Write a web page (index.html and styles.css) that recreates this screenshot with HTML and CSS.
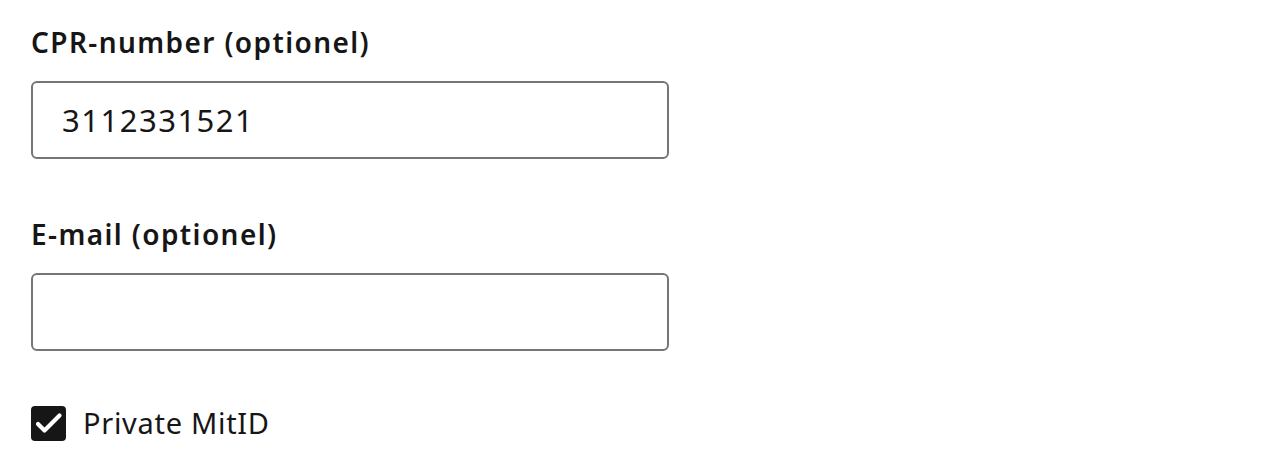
FILE: index.html
```html
<!DOCTYPE html>
<html lang="da">
<head>
    <meta charset="UTF-8">
    <title>MitID</title>
    <link rel="stylesheet" href="styles.css">
</head>
<body>
    <form class="form">
        <div class="field">
            <label for="cpr" class="label">CPR-number (optionel)</label>
            <input type="text" id="cpr" class="input" value="3112331521">
        </div>
        <div class="field">
            <label for="email" class="label">E-mail (optionel)</label>
            <input type="text" id="email" class="input">
        </div>
        <label class="check">
            <span class="check-box">
                <svg width="35" height="35" viewBox="0 0 35 35"><path d="M7 18l6.5 6.5L28.5 9.5" fill="none" stroke="#fff" stroke-width="4.2" stroke-linecap="round" stroke-linejoin="round"/></svg>
            </span>
            <span class="check-text">Private MitID</span>
        </label>
    </form>
</body>
</html>
```

FILE: styles.css
```css
* {
    margin: 0;
    padding: 0;
    box-sizing: border-box;
}

body {
    background: #fff;
    color: #161616;
    font-family: "Noto Sans", "Open Sans", sans-serif;
}

.form {
    width: 638px;
    margin-left: 31px;
    padding-top: 22px;
}

.field {
    margin-bottom: 55px;
}

.label {
    display: block;
    font-size: 28px;
    font-weight: 600;
    letter-spacing: 1.4px;
    line-height: 40px;
    margin-bottom: 19px;
}

.input {
    display: block;
    width: 100%;
    height: 78px;
    border: 2px solid #767676;
    border-radius: 6px;
    padding: 0 29px;
    font-family: inherit;
    font-size: 31px;
    letter-spacing: 1.5px;
    color: #161616;
    outline: none;
}

.check {
    display: flex;
    align-items: center;
    gap: 17px;
    margin-top: -3px;
}

.check-box {
    width: 35px;
    height: 35px;
    border-radius: 4px;
    background: #161616;
    display: flex;
}

.check-text {
    font-size: 29px;
    letter-spacing: 0.7px;
    line-height: 40px;
}
```
